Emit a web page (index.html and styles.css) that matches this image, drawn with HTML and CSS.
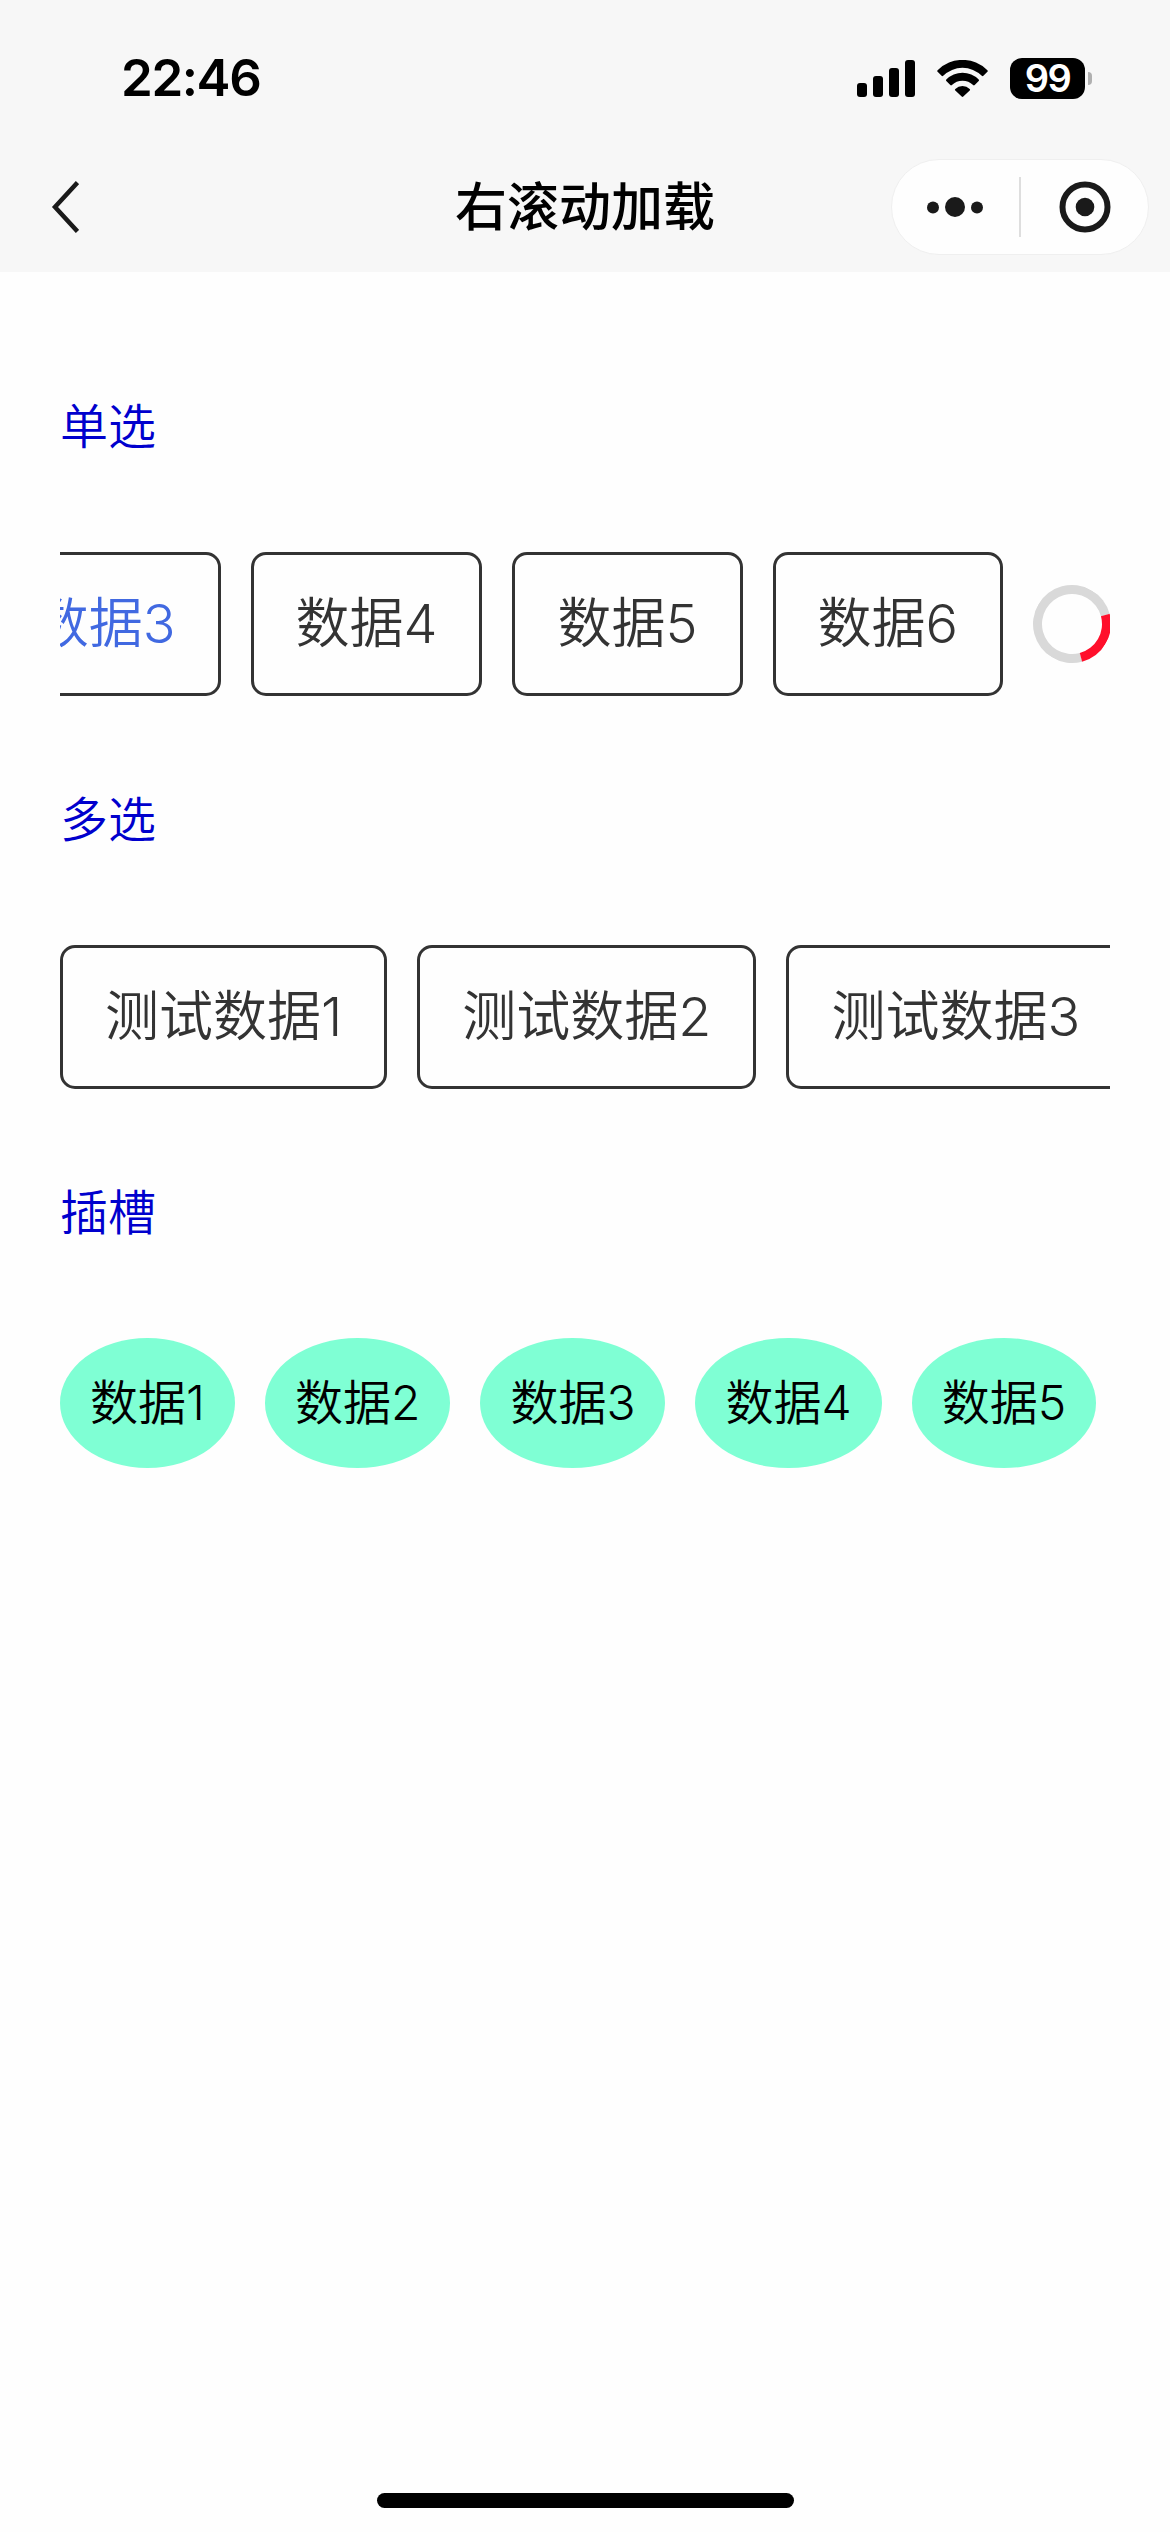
FILE: index.html
```
<!DOCTYPE html>
<html lang="zh-CN">
<head>
  <meta charset="UTF-8">
  <meta name="viewport" content="width=device-width, initial-scale=1.0">
  <title>右滚动加载</title>
  <link rel="stylesheet" href="styles.css">
</head>
<body>

  <header class="header">
    <div class="status-bar">
      <span class="time">22:46</span>
      <div class="status-icons">
        <svg class="signal" width="58" height="37" viewBox="0 0 58 37">
          <rect x="0" y="23" width="10" height="14" rx="3"/>
          <rect x="16" y="16" width="10" height="21" rx="3"/>
          <rect x="32" y="8" width="10" height="29" rx="3"/>
          <rect x="48" y="0" width="10" height="37" rx="3"/>
        </svg>
        <svg class="wifi" width="51" height="37" viewBox="0 0 51 37">
          <path d="M0.6 10.2a35.2 35.2 0 0 1 49.8 0q.8.8 0 1.6l-4 4q-.8.8-1.6 0a27.3 27.3 0 0 0-38.6 0q-.8.8-1.6 0l-4-4q-.8-.8 0-1.6z"/>
          <path d="M9.3 19.5a22.9 22.9 0 0 1 32.4 0q.8.8 0 1.6l-4 4q-.8.8-1.6 0a15 15 0 0 0-21.2 0q-.8.8-1.6 0l-4-4q-.8-.8 0-1.6z"/>
          <path d="M18.3 29a10.2 10.2 0 0 1 14.4 0q.8.8 0 1.6l-6.400 6q-.8.8-1.6 0l-6.400-6q-.8-.8 0-1.6z"/>
        </svg>
        <div class="battery">99</div>
        <span class="battery-cap"></span>
      </div>
    </div>
    <nav class="nav-bar">
      <svg class="back" width="28" height="52" viewBox="0 0 28 52">
        <path d="M26.5 1.5L4 26l22.5 24.500" fill="none" stroke="#1a1a1a" stroke-width="4.5"/>
      </svg>
      <h1 class="title">右滚动加载</h1>
      <div class="capsule">
        <svg width="56" height="22" viewBox="0 0 56 22">
          <circle cx="6" cy="11.5" r="6"/>
          <circle cx="28" cy="11" r="10"/>
          <circle cx="50" cy="11.5" r="6"/>
        </svg>
        <span class="divider"></span>
        <svg width="52" height="52" viewBox="0 0 52 52">
          <circle cx="26" cy="26" r="22.5" fill="none" stroke="#1a1a1a" stroke-width="6"/>
          <circle cx="26" cy="26" r="9.3"/>
        </svg>
      </div>
    </nav>
  </header>

  <main class="content">
    <!-- 单选 -->
    <h2 class="label">单选</h2>
    <div class="scroll scroll-end">
      <div class="item active">数据3</div>
      <div class="item">数据4</div>
      <div class="item">数据5</div>
      <div class="item">数据6</div>
      <div class="loading"></div>
    </div>

    <!-- 多选 -->
    <h2 class="label">多选</h2>
    <div class="scroll">
      <div class="item">测试数据1</div>
      <div class="item">测试数据2</div>
      <div class="item">测试数据3</div>
    </div>

    <!-- 插槽 -->
    <h2 class="label">插槽</h2>
    <div class="scroll">
      <div class="slot">数据1</div>
      <div class="slot">数据2</div>
      <div class="slot">数据3</div>
      <div class="slot">数据4</div>
      <div class="slot">数据5</div>
    </div>
  </main>

  <footer class="home-indicator"></footer>

</body>
</html>
```

FILE: styles.css
```
* {
  box-sizing: border-box;
}

body {
  margin: 0;
  height: 2532px;
  display: flex;
  flex-direction: column;
  background-color: #fefefe;
  font-family: Inter, "Noto Sans CJK SC", sans-serif;
  overflow: hidden;
}

.header {
  height: 272px;
  background-color: #f7f7f7;
}

.status-bar {
  display: flex;
  justify-content: space-between;
  align-items: center;
  height: 142px;
  padding: 14px 78px 0 121px;
}

.time {
  font-size: 51px;
  font-weight: 600;
  line-height: 60px;
  letter-spacing: -1.4px;
}

.status-icons {
  display: flex;
  align-items: center;
}

.wifi {
  margin: 0 22px;
}

.battery {
  width: 75px;
  height: 41px;
  border-radius: 12px;
  background-color: #000;
  color: #fff;
  font-size: 38px;
  font-weight: 600;
  line-height: 41px;
  letter-spacing: -1.5px;
  text-align: center;
}

.battery-cap {
  width: 4px;
  height: 13px;
  margin-left: 3px;
  border-radius: 0 4px 4px 0;
  background-color: #b0b0b0;
}

.nav-bar {
  display: grid;
  grid-template-columns: 1fr auto 1fr;
  align-items: center;
  height: 130px;
  padding: 0 21px 0 51px;
}

.title {
  margin: 0;
  padding: 2px 30px 0 0;
  font-size: 52px;
  font-weight: 500;
  line-height: 70px;
}

.capsule {
  justify-self: end;
  display: flex;
  align-items: center;
  width: 258px;
  height: 96px;
  padding-left: 35px;
  border: 1px solid #efefef;
  border-radius: 48px;
  background-color: #fefefe;
  fill: #1a1a1a;
}

.divider {
  width: 2px;
  height: 60px;
  margin: 0 38px 0 36px;
  background-color: #dedede;
}

.content {
  flex: 1;
  padding: 125px 60px 0;
}

.label {
  margin: 0 0 95px;
  color: mediumblue;
  font-size: 48px;
  font-weight: 350;
  line-height: 60px;
}

.scroll {
  display: flex;
  gap: 30px;
  height: 144px;
  margin-bottom: 94px;
  overflow: hidden;
}

/* 滚动到最右侧 */
.scroll-end {
  justify-content: flex-end;
}

.item {
  flex: none;
  height: 144px;
  padding: 0 42px;
  border: 3px solid #333;
  border-radius: 15px;
  color: #333;
  font-size: 54px;
  font-weight: 350;
  line-height: 138px;
  white-space: nowrap;
}

.active {
  color: royalblue;
}

.loading {
  flex: none;
  align-self: center;
  width: 78px;
  height: 78px;
  margin-right: -1px;
  border: 9px solid #d9d9d9;
  border-right-color: #ff0f2b;
  border-radius: 50%;
  transform: rotate(30deg);
}

.slot {
  flex: none;
  height: 130px;
  padding: 0 30px;
  border-radius: 50%;
  background-color: aquamarine;
  font-size: 48px;
  font-weight: 350;
  line-height: 130px;
}

.home-indicator {
  width: 417px;
  height: 15px;
  margin: 0 auto 24px;
  border-radius: 8px;
  background-color: #000;
}
```
